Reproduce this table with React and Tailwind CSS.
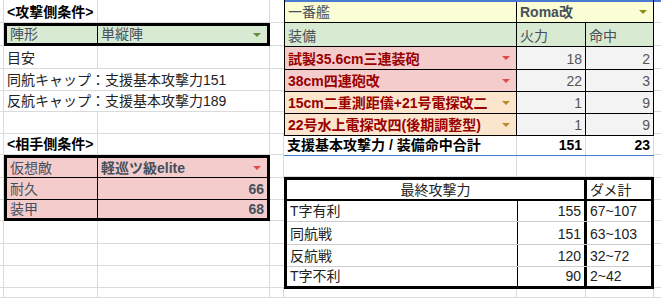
import React from 'react';

const GRID = 'border-[#dadada]';

const Cell = ({ className = '', children }) => (
  <div className={`flex items-end pb-[2px] px-[3px] whitespace-nowrap overflow-hidden ${className}`}>
    {children}
  </div>
);

const Arrow = ({ color }) => (
  <svg width="8" height="4" viewBox="0 0 8 4" className={`self-center ml-auto mr-[3px] shrink-0 mb-[-2px] ${color}`}>
    <path d="M0 0h8L4 4z" fill="currentColor" />
  </svg>
);

const equip = [
  { name: '試製35.6cm三連装砲', fp: 18, acc: 2, bg: 'bg-[#f4cccc]', arrow: 'text-[#e04a4a]', h: 'h-[23px]' },
  { name: '38cm四連砲改', fp: 22, acc: 3, bg: 'bg-[#f4cccc]', arrow: 'text-[#e04a4a]', h: 'h-[22px]' },
  { name: '15cm二重測距儀+21号電探改二', fp: 1, acc: 9, bg: 'bg-[#fce5cd]', arrow: 'text-[#b8892c]', h: 'h-[22px]' },
  { name: '22号水上電探改四(後期調整型)', fp: 1, acc: 9, bg: 'bg-[#fce5cd]', arrow: 'text-[#b8892c]', h: 'h-[22px]' },
];

const finals = [
  { label: 'T字有利', power: 155, dmg: '67~107', h: 'h-[21px] border-b' },
  { label: '同航戦', power: 151, dmg: '63~103', h: 'h-[23px] border-b' },
  { label: '反航戦', power: 120, dmg: '32~72', h: 'h-[22px] border-b' },
  { label: 'T字不利', power: 90, dmg: '2~42', h: 'h-[19px]' },
];

// row heights shared by every column group
const rows = ['h-[23px]', 'h-[24px]', 'h-[23px]', 'h-[22px]', 'h-[22px]', 'h-[22px]', 'h-[22px]', 'h-[23px]', 'h-[22px]', 'h-[22px]', 'h-[23px]', 'h-[22px]', 'h-[23px]', 'h-[10px]'];

const EmptyPair = ({ h }) => (
  <div className={`flex ${h}`}>
    <div className={`w-[94px] border-r border-b ${GRID}`} />
    <div className={`flex-1 border-r border-b ${GRID}`} />
  </div>
);

const EmptyTriple = ({ h }) => (
  <div className={`flex ${h}`}>
    <div className={`w-[233px] border-r border-b ${GRID}`} />
    <div className={`w-[69px] border-r border-b ${GRID}`} />
    <div className={`flex-1 border-r border-b ${GRID}`} />
  </div>
);

const App = () => {
  return (
    <div className="flex w-[661px] h-[298px] overflow-hidden bg-white text-[14px] leading-[16px] text-[#222] font-['Liberation_Sans','Noto_Sans_CJK_JP',sans-serif]">
      {/* sliver of the previous column */}
      <div className="w-[4px] flex flex-col shrink-0">
        {rows.map((h, i) => (
          <div key={i} className={`${h} border-r border-b ${GRID}`} />
        ))}
      </div>

      {/* left: attacker / enemy conditions */}
      <div className="w-[266px] flex flex-col shrink-0">
        <div className="flex h-[23px]">
          <Cell className={`w-[94px] border-r border-b ${GRID} font-bold text-black`}>&lt;攻撃側条件&gt;</Cell>
          <div className={`flex-1 border-r border-b ${GRID}`} />
        </div>
        <div className="flex h-[24px] border-[3px] border-black bg-[#d9ead3] text-[#46505c]">
          <Cell className="w-[91px] border-r border-black pb-px">陣形</Cell>
          <Cell className="flex-1 pb-px">
            単縦陣
            <Arrow color="text-[#5f8d3a]" />
          </Cell>
        </div>
        <div className="flex h-[23px]">
          <Cell className={`w-[94px] border-r border-b ${GRID}`}>目安</Cell>
          <div className={`flex-1 border-r border-b ${GRID}`} />
        </div>
        <Cell className={`h-[22px] border-r border-b ${GRID}`}>同航キャップ：支援基本攻撃力151</Cell>
        <Cell className={`h-[22px] border-r border-b ${GRID}`}>反航キャップ：支援基本攻撃力189</Cell>
        <EmptyPair h="h-[22px]" />
        <div className="flex h-[22px]">
          <Cell className={`w-[94px] border-r border-b ${GRID} font-bold text-black`}>&lt;相手側条件&gt;</Cell>
          <div className={`flex-1 border-r border-b ${GRID}`} />
        </div>
        <div className="flex flex-col h-[67px] border-[3px] border-black bg-[#f4cccc] text-[#46505c]">
          <div className="flex h-[20px] border-b border-black">
            <Cell className="w-[91px] border-r border-black pb-px">仮想敵</Cell>
            <Cell className="flex-1 font-bold pb-px">
              軽巡ツ級elite
              <Arrow color="text-[#e04a4a]" />
            </Cell>
          </div>
          <div className="flex h-[22px] border-b border-black">
            <Cell className="w-[91px] border-r border-black">耐久</Cell>
            <Cell className="flex-1 justify-end font-bold">66</Cell>
          </div>
          <div className="flex flex-1">
            <Cell className="w-[91px] border-r border-black pb-px">装甲</Cell>
            <Cell className="flex-1 justify-end font-bold pb-px">68</Cell>
          </div>
        </div>
        <EmptyPair h="h-[23px]" />
        <EmptyPair h="h-[22px]" />
        <EmptyPair h="h-[23px]" />
        <EmptyPair h="h-[10px]" />
      </div>

      {/* narrow spacer column */}
      <div className="w-[14px] flex flex-col shrink-0">
        {rows.map((h, i) => (
          <div key={i} className={`${h} border-b ${GRID} ${i < 6 || (i > 7 && i < 13) ? '' : 'border-r'}`} />
        ))}
      </div>

      {/* right: ship, equipment and final power */}
      <div className="w-[370px] flex flex-col shrink-0">
        <div className="flex flex-col border-x border-black">
          <div className="flex h-[23px] border-t-2 border-t-[#4a7bd0] border-b border-b-black bg-[#fbfdd4] text-[#46505c]">
            <Cell className="w-[232px] border-r border-black">一番艦</Cell>
            <Cell className="flex-1 font-bold">
              Roma改
              <Arrow color="text-[#8d8d1a]" />
            </Cell>
          </div>
          <div className="flex h-[24px] border-b border-black bg-[#d9ead3] text-[#46505c]">
            <Cell className="w-[232px] border-r border-black">装備</Cell>
            <Cell className="w-[69px] border-r border-black">火力</Cell>
            <Cell className="flex-1">命中</Cell>
          </div>
          {equip.map((e) => (
            <div key={e.name} className={`flex ${e.h} border-b border-black`}>
              <Cell className={`w-[232px] border-r border-black ${e.bg} font-bold text-[#990000]`}>
                {e.name}
                <Arrow color={e.arrow} />
              </Cell>
              <Cell className="w-[69px] border-r border-black bg-[#f3f3f3] justify-end text-[#555]">{e.fp}</Cell>
              <Cell className="flex-1 bg-[#f3f3f3] justify-end text-[#555]">{e.acc}</Cell>
            </div>
          ))}
        </div>
        <div className="flex h-[22px] border-b border-[#4a7bd0] font-bold text-black">
          <Cell className={`w-[233px] border-r ${GRID}`}>支援基本攻撃力 / 装備命中合計</Cell>
          <Cell className={`w-[69px] border-r ${GRID} justify-end`}>151</Cell>
          <Cell className={`flex-1 border-r ${GRID} justify-end`}>23</Cell>
        </div>
        <EmptyTriple h="h-[23px]" />
        <div className="flex flex-col h-[112px] border-[3px] border-black">
          <div className="flex h-[21px] border-b-2 border-black">
            <Cell className="w-[300px] border-r-[3px] border-black justify-center pb-px">最終攻撃力</Cell>
            <Cell className="flex-1 pb-px">ダメ計</Cell>
          </div>
          {finals.map((f) => (
            <div key={f.label} className={`flex ${f.h} border-[#cccccc]`}>
              <Cell className="w-[231px] border-r border-black">{f.label}</Cell>
              <Cell className="w-[69px] border-r-[3px] border-black justify-end">{f.power}</Cell>
              <Cell className="flex-1">{f.dmg}</Cell>
            </div>
          ))}
        </div>
        <EmptyTriple h="h-[10px]" />
      </div>

      {/* sliver of the next column */}
      <div className="w-[7px] flex flex-col shrink-0">
        {rows.map((h, i) => (
          <div key={i} className={`${h} border-b ${GRID} ${i === 0 ? 'border-t-2 border-t-[#4a7bd0]' : ''}`} />
        ))}
      </div>
    </div>
  );
};

export default App;
